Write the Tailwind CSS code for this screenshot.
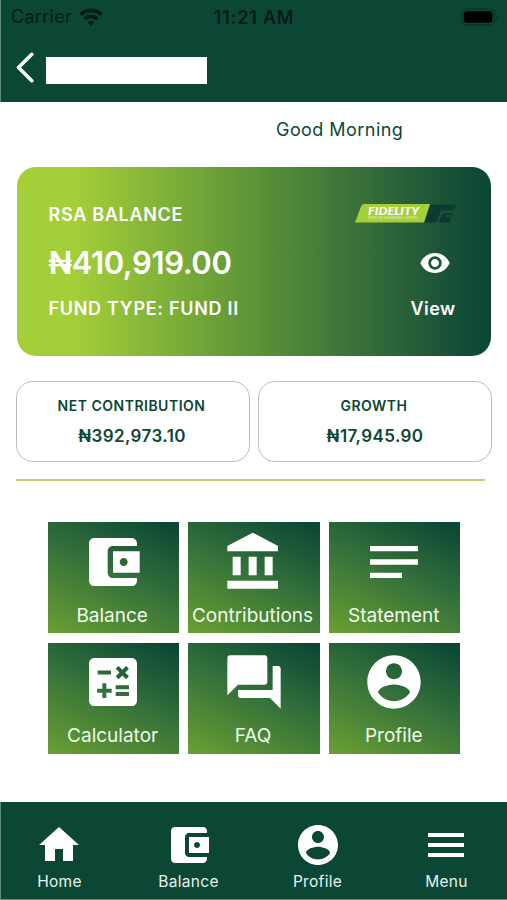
<!DOCTYPE html>
<html lang="en">
<head>
<meta charset="utf-8">
<title>RSA Balance</title>
<script src="https://cdn.jsdelivr.net/npm/@tailwindcss/browser@4"></script>
</head>
<body class="bg-white">
<svg class="hidden">
  <symbol id="wallet" viewBox="0 0 24 24"><path d="M21 18v1c0 1.1-.9 2-2 2H5c-1.11 0-2-.9-2-2V5c0-1.1.89-2 2-2h14c1.1 0 2 .9 2 2v1h-9c-1.11 0-2 .9-2 2v8c0 1.1.89 2 2 2h9zm-9-2h10V8H12v8zm4-2.5c-.83 0-1.5-.67-1.5-1.5s.67-1.5 1.5-1.5 1.5.67 1.5 1.5-.67 1.5-1.5 1.5z"/></symbol>
  <symbol id="bank" viewBox="0 0 24 24"><path d="M4 10v7h3v-7H4zm6 0v7h3v-7h-3zM2 22h19v-3H2v3zm14-12v7h3v-7h-3zm-4.5-9L2 6v2h19V6l-9.500-5z"/></symbol>
  <symbol id="notes" viewBox="0 0 24 24"><path d="M3 18h12v-2H3v2zM3 6v2h18V6H3zm0 7h18v-2H3v2z"/></symbol>
  <symbol id="calc" viewBox="0 0 24 24"><path d="M19 3H5c-1.100 0-2 .9-2 2v14c0 1.100.9 2 2 2h14c1.100 0 2-.9 2-2V5c0-1.100-.9-2-2-2zm-5.970 4.060L14.090 6l1.410 1.410L16.910 6l1.060 1.060-1.410 1.410 1.410 1.410-1.060 1.060-1.410-1.400-1.410 1.410-1.060-1.060 1.410-1.410-1.410-1.420zm-6.780.660h5v1.500h-5v-1.500zM11.500 16h-2v2H8v-2H6v-1.500h2v-2h1.500v2h2V16zm6.500 1.250h-5v-1.500h5v1.500zm0-2.500h-5v-1.500h5v1.500z"/></symbol>
  <symbol id="chat" viewBox="0 0 24 24"><path d="M21 6h-2v9H6v2c0 .55.45 1 1 1h11l4 4V7c0-.55-.45-1-1-1zm-4 6V3c0-.55-.45-1-1-1H3c-.55 0-1 .45-1 1v14l4-4h10c.55 0 1-.45 1-1z"/></symbol>
  <symbol id="person" viewBox="0 0 24 24"><path d="M12 2C6.480 2 2 6.480 2 12s4.480 10 10 10 10-4.480 10-10S17.520 2 12 2zm0 3c1.660 0 3 1.340 3 3s-1.340 3-3 3-3-1.340-3-3 1.340-3 3-3zm0 14.200c-2.500 0-4.710-1.280-6-3.220.03-1.990 4-3.080 6-3.080 1.990 0 5.970 1.090 6 3.080-1.290 1.940-3.500 3.220-6 3.220z"/></symbol>
  <symbol id="home" viewBox="0 0 24 24"><path d="M10 20v-6h4v6h5v-8h3L12 3 2 12h3v8z"/></symbol>
  <symbol id="menu" viewBox="0 0 24 24"><path d="M3 18h18v-2H3v2zm0-5h18v-2H3v2zm0-7v2h18V6H3z"/></symbol>
</svg>
<div class="w-[507px] h-[900px] overflow-hidden flex flex-col bg-white font-['Inter','Liberation_Sans',sans-serif] text-[#0c4735] whitespace-nowrap">
  <header class="h-[102px] shrink-0 bg-[#0c4735] border-l border-[#5f8b7d]">
    <div class="h-[34px] pl-[10px] pr-[8px] grid grid-cols-3 items-center text-[#041c15]">
      <div class="flex items-center gap-[7px]">
        <span class="text-[18px] leading-[20px] tracking-[0.3px]">Carrier</span>
        <svg class="w-[24px] h-[18px]" viewBox="0 0 24 18" fill="none" stroke="currentColor" stroke-width="3.800"><path d="M1.500 6.700C7.500.8 16.500.8 22.500 6.700"/><path d="M5.600 10.900c3.700-3.500 9.100-3.500 12.800 0"/><path d="M12 17.500l-3.400-3.300c1.900-1.700 4.900-1.700 6.800 0z" fill="currentColor" stroke="none"/></svg>
      </div>
      <span class="-ml-[2px] pt-px text-center text-[18px] leading-[20px] font-semibold tracking-[0.8px]">11:21 AM</span>
      <svg class="w-[38px] h-[18px] justify-self-end -mt-px" viewBox="0 0 38 18"><rect x=".7" y="1" width="33" height="16" rx="5" fill="none" stroke="#08372a" stroke-width="1.400"/><rect x="2.800" y="3.200" width="28.600" height="11.600" rx="3" fill="#000"/><path d="M35.500 6.500c2.200.8 2.200 4.200 0 5z" fill="#08372a"/></svg>
    </div>
    <div class="flex items-start pl-[14px] pt-[17px]">
      <svg class="w-[20px] h-[32px]" viewBox="0 0 20 32" fill="none" stroke="#fff" stroke-width="3.600" stroke-linecap="round" stroke-linejoin="round"><path d="M16.800 3.300L3.500 16.500l13.300 13.200"/></svg>
      <div class="ml-[10.500px] mt-[6px] w-[161px] h-[27px] bg-white"></div>
    </div>
  </header>

  <main class="flex-1 px-[16px]">
    <p class="h-[64.500px] pt-[17px] pl-[260px] text-[18px] leading-[22px] tracking-[0.45px]">Good Morning</p>
    <section class="ml-[0.500px] h-[189.500px] w-[474.500px] rounded-[19px] bg-linear-to-r from-[#a4cf38] from-12% via-[#5c9437] via-50% to-[#0c4735] to-98% pl-[32px] pr-[35.500px] pt-[36.500px] text-white flex justify-between">
      <div class="flex flex-col">
        <span class="text-[18px] leading-[24px] font-semibold tracking-[0.700px]">RSA BALANCE</span>
        <span class="mt-[16px] text-[31px] leading-[40px] font-semibold tracking-[-0.400px]">₦410,919.00</span>
        <span class="mt-[14px] text-[18px] leading-[24px] font-semibold tracking-[0.700px]">FUND TYPE: FUND II</span>
      </div>
      <div class="flex flex-col items-end">
        <svg class="w-[102px] h-[20px]" viewBox="0 0 102 20"><path d="M10 1H76L70 19.500H1L7 3.500Q8 1 10 1z" fill="#a4cf38"/><path d="M76.500 1.500H102L100 7.500H89Q87 7.500 86.200 9.500L82.500 19.500H70.500z" fill="#0c3a32"/><path d="M90 10H99L98.300 12.200H92.500L91.700 14.200H97.600L95.600 19.500H84.500L87.500 11.500Q88 10 90 10z" fill="#0c3a32"/><text x="14" y="12.200" textLength="51" lengthAdjust="spacingAndGlyphs" font-family="Lato" font-size="11.500" font-weight="900" font-style="italic" fill="#fff">FIDELITY</text><text x="14" y="16.200" textLength="49" font-family="Lato" font-size="3" fill="#e8f5c8">PENSION MANAGERS LIMITED</text></svg>
        <svg class="mt-[24px] mr-[5px] w-[32px] h-[32px]" viewBox="0 0 24 24" fill="#fff"><path d="M12 4.500C7 4.500 2.730 7.610 1 12c1.730 4.390 6 7.500 11 7.500s9.270-3.110 11-7.500c-1.730-4.390-6-7.500-11-7.500zM12 17c-2.760 0-5-2.240-5-5s2.240-5 5-5 5 2.240 5 5-2.240 5-5 5zm0-8c-1.660 0-3 1.340-3 3s1.340 3 3 3 3-1.340 3-3-1.340-3-3-3z"/></svg>
        <span class="mt-[18px] text-[18px] leading-[24px] font-semibold tracking-[0.4px]">View</span>
      </div>
    </section>

    <section class="mt-[25px] grid grid-cols-2 gap-[8px] w-[476px] font-semibold text-center">
      <div class="h-[81px] rounded-[17px] border border-[#b5c2be] pt-[15px]">
        <p class="-ml-[3px] text-[14px] leading-[18px] tracking-[0.500px]">NET CONTRIBUTION</p>
        <p class="-ml-[2px] mt-[10px] text-[17px] leading-[22px] tracking-[0.4px]">₦392,973.10</p>
      </div>
      <div class="h-[81px] rounded-[17px] border border-[#b5c2be] pt-[15px]">
        <p class="-ml-[2px] text-[14px] leading-[18px] tracking-[0.500px]">GROWTH</p>
        <p class="mt-[10px] text-[17px] leading-[22px] tracking-[0.4px]">₦17,945.90</p>
      </div>
    </section>
    <div class="mt-[17px] h-[2px] w-[469px] bg-[#bdd371]"></div>

    <section class="mt-[41px] ml-[32px] w-[412px] grid grid-cols-3 gap-x-[9px] gap-y-[10px] text-[#effbea] text-[19px] leading-[24px]">
      <div class="h-[111px] bg-linear-[25deg,#6aa033_0%,#35713a_52%,#0c4735_96%] flex flex-col items-center pt-[8px]"><svg class="size-[64px] fill-white -ml-[2px]"><use href="#wallet"/></svg><span class="mt-[10px] -ml-[3px]">Balance</span></div>
      <div class="h-[111px] bg-linear-[25deg,#6aa033_0%,#35713a_52%,#0c4735_96%] flex flex-col items-center pt-[8px]"><svg class="size-[64px] fill-white"><use href="#bank"/></svg><span class="mt-[10px] -ml-[3px]">Contributions</span></div>
      <div class="h-[111px] bg-linear-[25deg,#6aa033_0%,#35713a_52%,#0c4735_96%] flex flex-col items-center pt-[8px]"><svg class="size-[64px] fill-white -ml-[1px]"><use href="#notes"/></svg><span class="mt-[10px] -ml-[1px]">Statement</span></div>
      <div class="h-[111px] bg-linear-[25deg,#6aa033_0%,#35713a_52%,#0c4735_96%] flex flex-col items-center pt-[7.400px]"><svg class="size-[64px] fill-white -ml-[2px]"><use href="#calc"/></svg><span class="mt-[9.600px] -ml-[2px]">Calculator</span></div>
      <div class="h-[111px] bg-linear-[25deg,#6aa033_0%,#35713a_52%,#0c4735_96%] flex flex-col items-center pt-[7.400px]"><svg class="size-[64px] fill-white"><use href="#chat"/></svg><span class="mt-[9.600px] -ml-[2px]">FAQ</span></div>
      <div class="h-[111px] bg-linear-[25deg,#6aa033_0%,#35713a_52%,#0c4735_96%] flex flex-col items-center pt-[7.400px]"><svg class="size-[64px] fill-white -ml-[1px]"><use href="#person"/></svg><span class="mt-[9.600px] -ml-[1px]">Profile</span></div>
    </section>
  </main>

  <nav class="h-[98px] shrink-0 bg-[#0c4735] border-l border-b border-[#5f8b7d] overflow-hidden">
    <div class="-ml-[6px] w-[516px] grid grid-cols-4 pt-[19px] text-[#e6f3ee] text-[15.5px] leading-[20px] tracking-[0.3px]">
      <div class="flex flex-col items-center"><svg class="size-[48px] fill-white -ml-px"><use href="#home"/></svg><span class="mt-[3px]">Home</span></div>
      <div class="flex flex-col items-center"><svg class="size-[48px] fill-white"><use href="#wallet"/></svg><span class="mt-[3px]">Balance</span></div>
      <div class="flex flex-col items-center"><svg class="size-[48px] fill-white"><use href="#person"/></svg><span class="mt-[3px]">Profile</span></div>
      <div class="flex flex-col items-center"><svg class="size-[48px] fill-white -ml-px"><use href="#menu"/></svg><span class="mt-[3px]">Menu</span></div>
    </div>
  </nav>
</div>
</body>
</html>
